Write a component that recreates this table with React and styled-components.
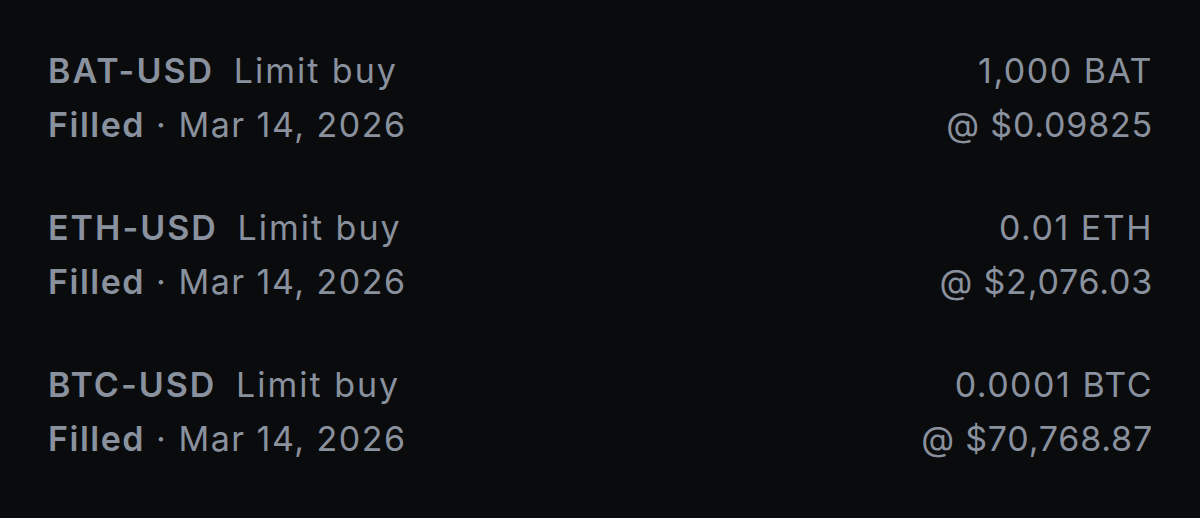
import React from "react";
import styled, { createGlobalStyle } from "styled-components";

const GlobalStyle = createGlobalStyle`
	html, body {
		margin: 0;
		padding: 0;
		background: #0a0b0d;
	}
	body {
		font-family: Inter, "Noto Sans", sans-serif;
	}
`;

const Page = styled.div`
	width: 1200px;
	height: 518px;
	box-sizing: border-box;
	padding: 44px 47px 0 48px;
	display: flex;
	flex-direction: column;
	gap: 49px;
	background: #0a0b0d;
	color: #8a919e;
`;

const Row = styled.div`
	display: flex;
	justify-content: space-between;
	font-size: 34px;
	line-height: 54px;
`;

const Col = styled.div`
	display: flex;
	flex-direction: column;
	align-items: ${(p) => (p.$right ? "flex-end" : "flex-start")};
`;

const Line = styled.div`
	white-space: nowrap;
	letter-spacing: ${(p) => p.$spacing ?? 1.5}px;
`;

const Strong = styled.span`
	font-weight: 600;
	margin-right: ${(p) => p.$gap || 0}px;
`;

const orders = [
	{ pair: "BAT-USD", amount: "1,000 BAT", price: "$0.09825" },
	{ pair: "ETH-USD", amount: "0.01 ETH", price: "$2,076.03" },
	{ pair: "BTC-USD", amount: "0.0001 BTC", price: "$70,768.87" },
];

const App = () => (
	<>
		<GlobalStyle />
		<Page>
			{orders.map((o) => (
				<Row key={o.pair}>
					<Col>
						<Line $spacing={2}>
							<Strong $gap={8}>{o.pair}</Strong> Limit buy
						</Line>
						<Line>
							<Strong>Filled</Strong> · Mar 14, 2026
						</Line>
					</Col>
					<Col $right>
						<Line>{o.amount}</Line>
						<Line $spacing={0.8}>@ {o.price}</Line>
					</Col>
				</Row>
			))}
		</Page>
	</>
);

export default App;
